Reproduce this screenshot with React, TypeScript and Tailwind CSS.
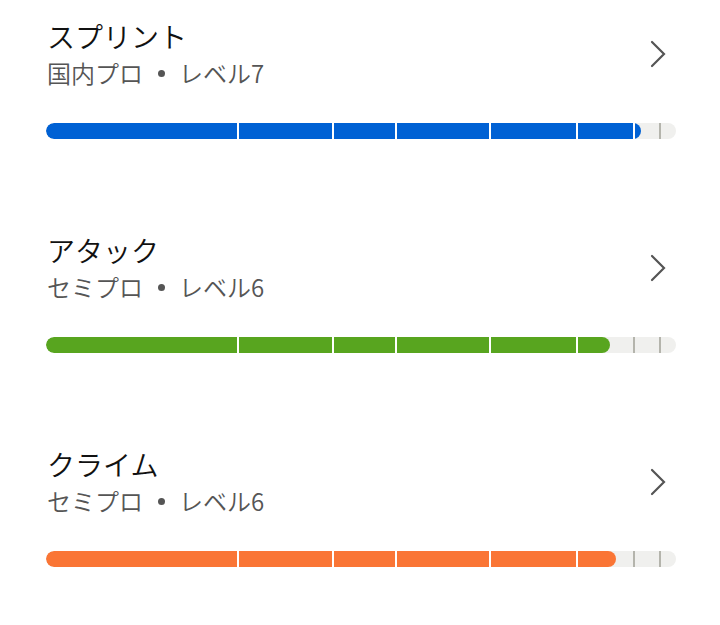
import React from "react";

const BOUNDS = [192, 287, 350, 444, 531, 588, 614];

type Item = {
  title: string;
  pre: string;
  post: string;
  color: string;
  fill: number;
};

const items: Item[] = [
  { title: "スプリント", pre: "国内プロ", post: "レベル7", color: "#0061d4", fill: 595 },
  { title: "アタック", pre: "セミプロ", post: "レベル6", color: "#58a51f", fill: 564 },
  { title: "クライム", pre: "セミプロ", post: "レベル6", color: "#fa7535", fill: 570 },
];

function Bar({ color, fill }: { color: string; fill: number }) {
  return (
    <div className="relative h-[16px] w-[630px] rounded-full bg-[#f0f0ee] overflow-hidden">
      <div
        className="absolute left-0 top-0 h-full rounded-full"
        style={{ width: fill, backgroundColor: color }}
      />
      {BOUNDS.map((b) => (
        <div
          key={b}
          className="absolute top-0 h-full w-[2px]"
          style={{
            left: b - 1,
            backgroundColor: b < fill - 4 ? "#ffffff" : "#b4b4ac",
          }}
        />
      ))}
    </div>
  );
}

function Chevron() {
  return (
    <svg width="16" height="28" viewBox="0 0 16 28" className="mr-[8px]">
      <polyline
        points="2,2 14,14 2,26"
        fill="none"
        stroke="#555555"
        strokeWidth="2.2"
        strokeLinecap="round"
        strokeLinejoin="miter"
      />
    </svg>
  );
}

export default function App() {
  return (
    <div
      className="w-[720px] h-[625px] bg-white px-[46px]"
      style={{ fontFamily: '"Noto Sans CJK JP", "Noto Sans", sans-serif' }}
    >
      {items.map((it) => (
        <section key={it.title} className="h-[214px] pt-[17px]">
          <div className="flex items-center justify-between">
            <div className="pl-[1px]">
              <div className="text-[28px] leading-[38px] font-[350] text-[#111111]">{it.title}</div>
              <div className="flex items-center text-[24px] leading-[36px] font-[350] text-[#555555]">
                <span>{it.pre}</span>
                <span className="flex w-[36px] justify-center">
                  <span className="block h-[7px] w-[7px] rounded-full bg-[#555555]" />
                </span>
                <span>{it.post}</span>
              </div>
            </div>
            <Chevron />
          </div>
          <div className="mt-[32px]">
            <Bar color={it.color} fill={it.fill} />
          </div>
        </section>
      ))}
    </div>
  );
}
